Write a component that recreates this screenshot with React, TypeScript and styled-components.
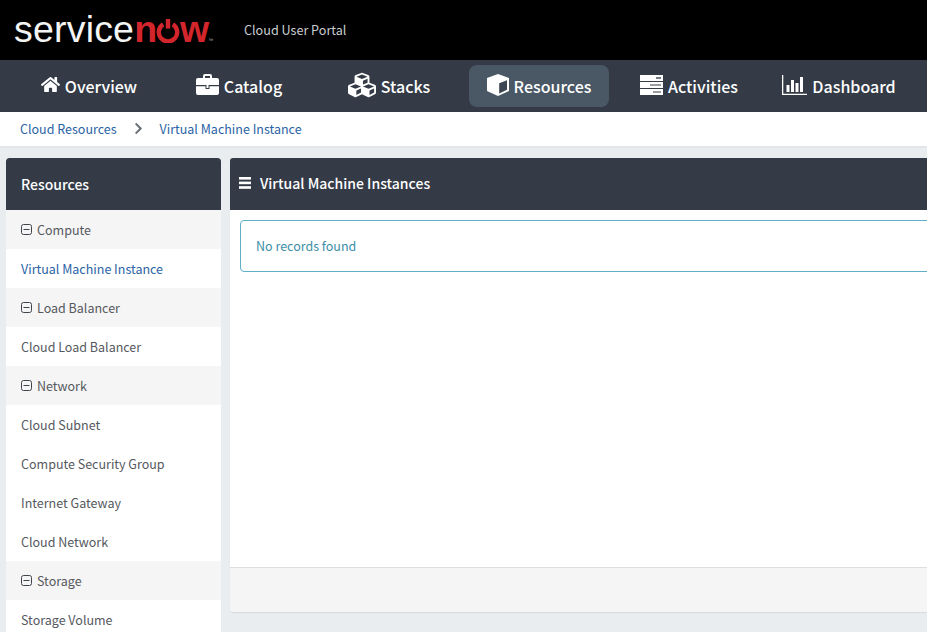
import React from 'react';
import styled, { createGlobalStyle } from 'styled-components';
import { FaHome, FaCubes, FaChevronRight } from 'react-icons/fa';

const Global = createGlobalStyle`
  html, body { margin: 0; padding: 0; height: 632px; overflow: hidden; background: #e9edef; }
  body { font-family: "Noto Sans CJK SC", "Noto Sans", sans-serif; font-size: 12.5px; }
  * { box-sizing: border-box; }
`;

const Page = styled.div`
  width: 927px;
  height: 632px;
  overflow: hidden;
  display: flex;
  flex-direction: column;
`;
const TopBar = styled.header`
  height: 60px;
  flex: none;
  background: #000;
  display: flex;
  align-items: center;
  padding-left: 14px;
`;
const Logo = styled.div`
  width: 200px;
  display: flex;
  align-items: baseline;
  font-family: "Liberation Sans", sans-serif;
  font-size: 37.5px;
  line-height: 40px;
  letter-spacing: 0.2px;
  color: #f4f4f4;
  margin-top: -3px;
  white-space: nowrap;
`;
const LogoRed = styled.span`
  color: #d3262c;
  font-weight: 700;
  display: inline-flex;
  align-items: baseline;
  letter-spacing: -1px;
  margin-left: 0;
`;
const Mark = styled.sup`
  font-size: 5px;
  line-height: 0;
  color: #bbb;
  vertical-align: 22px;
  font-weight: 400;
`;
const PortalName = styled.div`
  margin: -2px 0 0 30px;
  color: #c9ced2;
  font-size: 12.6px;
`;
const Nav = styled.nav`
  height: 52px;
  flex: none;
  background: #343b47;
  display: grid;
  grid-template-columns: repeat(6, 150px);
  padding-left: 14px;
  align-items: center;
`;
const NavCell = styled.div`
  display: flex;
  justify-content: center;
`;
const NavItem = styled.a<{ $active?: boolean }>`
  height: 42px;
  padding: 0 18px;
  border-radius: 8px;
  background: ${p => (p.$active ? '#4a5866' : 'transparent')};
  color: #fff;
  display: flex;
  align-items: center;
  gap: 5px;
  font-size: 16px;
  font-weight: 500;
  white-space: nowrap;
  svg { flex: none; margin-top: -3px; }
`;
const Crumbs = styled.div`
  height: 36px;
  flex: none;
  background: #fff;
  border-bottom: 2px solid #e2e6e9;
  display: flex;
  align-items: center;
  padding: 0 0 2px 20px;
  color: #2a63a5;
  font-size: 12.5px;
`;
const CrumbSep = styled.span`
  display: flex;
  color: #6a6f75;
  margin: 0 15px 0 15px;
`;
const Body = styled.div`
  flex: 1;
  display: flex;
  align-items: flex-start;
  padding: 10px 0 0 6px;
  gap: 9px;
  min-height: 0;
`;
const Sidebar = styled.aside`
  width: 215px;
  flex: none;
  background: #fff;
  border-radius: 3px 3px 0 0;
  height: 480px;
  overflow: hidden;
`;
const PanelHead = styled.div`
  height: 52px;
  background: #343b47;
  color: #fff;
  display: flex;
  align-items: center;
  font-size: 14px;
  font-weight: 500;
  border-radius: 3px 3px 0 0;
`;
const SideHead = styled(PanelHead)`
  padding-left: 15px;
`;
const MainHead = styled(PanelHead)`
  padding: 0 0 2px 9px;
  gap: 9px;
`;
const GroupRow = styled.div`
  height: 39px;
  background: #f5f5f5;
  display: flex;
  align-items: center;
  gap: 5px;
  padding: 0 0 1px 15px;
  color: #55595e;
  font-size: 12.5px;
`;
const LinkRow = styled.div<{ $active?: boolean }>`
  height: 39px;
  background: #fff;
  display: flex;
  align-items: center;
  padding: 0 0 1px 15px;
  color: ${p => (p.$active ? '#2a63a5' : '#55595e')};
  font-size: 12.5px;
`;
const Main = styled.main`
  width: 760px;
  flex: none;
  height: 454px;
  background: #fff;
  border-radius: 3px;
  box-shadow: 0 1px 1px rgba(0, 0, 0, 0.08);
  display: flex;
  flex-direction: column;
`;
const MainBody = styled.div`
  flex: 1;
  padding: 10px;
`;
const Alert = styled.div`
  height: 52px;
  border: 1px solid #5fb0c6;
  border-radius: 4px;
  display: flex;
  align-items: center;
  padding: 0 0 1px 15px;
  color: #3a8ea6;
  font-size: 12.5px;
`;
const MainFoot = styled.div`
  height: 45px;
  background: #f5f5f5;
  border-top: 1px solid #dcdfe2;
  border-radius: 0 0 3px 3px;
`;

const Minus = () => (
  <svg width="11" height="11" viewBox="0 0 11 11" fill="none" stroke="#3f444a" strokeWidth="1">
    <rect x="0.5" y="0.5" width="10" height="10" rx="2" />
    <path d="M2.5 5.5h6" />
  </svg>
);
const Bars = () => (
  <svg width="12" height="12" viewBox="0 0 12 12" fill="#fff">
    <rect y="0" width="12" height="2.6" />
    <rect y="4.6" width="12" height="2.6" />
    <rect y="9.2" width="12" height="2.6" />
  </svg>
);
const Briefcase = () => (
  <svg width="23" height="21" viewBox="0 0 23 21" fill="#fff">
    <path fillRule="evenodd" d="M7 4V2a2 2 0 0 1 2-2h5a2 2 0 0 1 2 2v2h-2V2H9v2z" />
    <path d="M2 4h19a2 2 0 0 1 2 2v5H0V6a2 2 0 0 1 2-2z" />
    <path d="M0 12.2h9.5V15h4v-2.8H23V19a2 2 0 0 1-2 2H2a2 2 0 0 1-2-2z" />
    <rect x="10.5" y="11" width="2" height="3" />
  </svg>
);
const Cube = () => (
  <svg width="22" height="22" viewBox="0 0 22 22">
    <path d="M11 0 22 4v13l-11 5L0 17V4z" fill="#fff" />
    <path d="M12.2 9.2 20 6.2v9.6l-7.8 3.6z" fill="#3c4652" />
  </svg>
);
const Server = () => (
  <svg width="23" height="20" viewBox="0 0 23 20" fill="#fff">
    <rect y="0" width="23" height="6" />
    <rect y="7" width="23" height="6" />
    <rect y="14" width="23" height="6" />
    <rect x="16" y="2" width="5" height="2" fill="#777d85" />
    <rect x="10" y="9.5" width="11" height="1" fill="#343b47" />
    <rect x="13" y="16.5" width="8" height="1" fill="#343b47" />
  </svg>
);
const Chart = () => (
  <svg width="25" height="20" viewBox="0 0 25 20" fill="#fff">
    <path d="M0 0h1.3v18.7H25V20H0z" />
    <rect x="4.5" y="10" width="3" height="7" />
    <rect x="9" y="5" width="3" height="12" />
    <rect x="13.5" y="8" width="3" height="9" />
    <rect x="18" y="2" width="3" height="15" />
  </svg>
);
const PowerO = () => (
  <svg width="24" height="24" viewBox="0 0 25 25" fill="none" stroke="#d3262c" strokeWidth="4.6" style={{ alignSelf: 'flex-end', margin: '0 0 6px 0' }}>
    <path d="M7.5 5.5a9.6 9.6 0 1 0 10 0" />
    <path d="M12.5 0v10" />
  </svg>
);

const navItems = [
  { label: 'Overview', icon: <FaHome size={19} /> },
  { label: 'Catalog', icon: <Briefcase /> },
  { label: 'Stacks', icon: <FaCubes size={28} /> },
  { label: 'Resources', icon: <Cube />, active: true },
  { label: 'Activities', icon: <Server /> },
  { label: 'Dashboard', icon: <Chart /> },
];

type Row = { group?: boolean; label: string; active?: boolean };
const rows: Row[] = [
  { group: true, label: 'Compute' },
  { label: 'Virtual Machine Instance', active: true },
  { group: true, label: 'Load Balancer' },
  { label: 'Cloud Load Balancer' },
  { group: true, label: 'Network' },
  { label: 'Cloud Subnet' },
  { label: 'Compute Security Group' },
  { label: 'Internet Gateway' },
  { label: 'Cloud Network' },
  { group: true, label: 'Storage' },
  { label: 'Storage Volume' },
];

export default function App() {
  return (
    <Page>
      <Global />
      <TopBar>
        <Logo>
          service
          <LogoRed>n<PowerO />w</LogoRed>
          <Mark>™</Mark>
        </Logo>
        <PortalName>Cloud User Portal</PortalName>
      </TopBar>
      <Nav>
        {navItems.map(n => (
          <NavCell key={n.label}>
            <NavItem $active={n.active}>
              {n.icon}
              {n.label}
            </NavItem>
          </NavCell>
        ))}
      </Nav>
      <Crumbs>
        Cloud Resources
        <CrumbSep><FaChevronRight size={13} /></CrumbSep>
        Virtual Machine Instance
      </Crumbs>
      <Body>
        <Sidebar>
          <SideHead>Resources</SideHead>
          {rows.map(r =>
            r.group ? (
              <GroupRow key={r.label}><Minus />{r.label}</GroupRow>
            ) : (
              <LinkRow key={r.label} $active={r.active}>{r.label}</LinkRow>
            )
          )}
        </Sidebar>
        <Main>
          <MainHead><Bars />Virtual Machine Instances</MainHead>
          <MainBody><Alert>No records found</Alert></MainBody>
          <MainFoot />
        </Main>
      </Body>
    </Page>
  );
}
